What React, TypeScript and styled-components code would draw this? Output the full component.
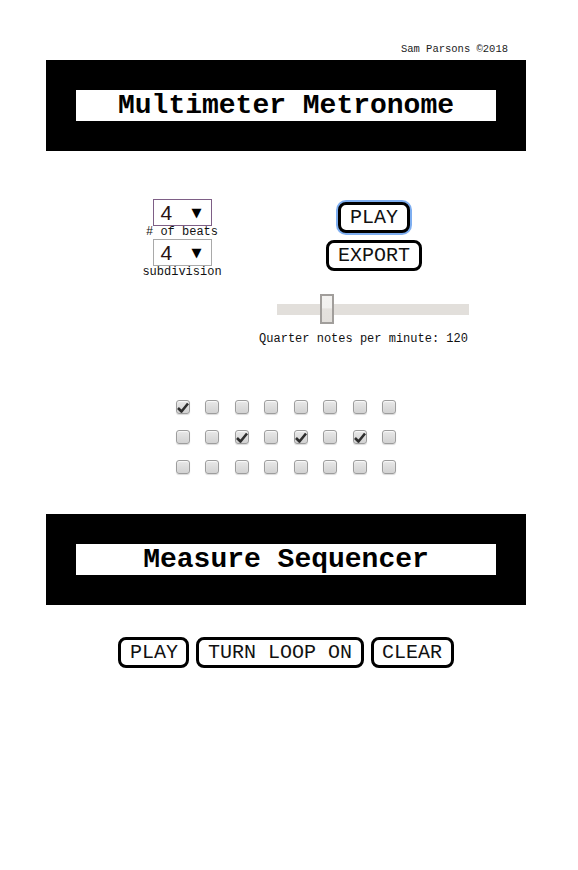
import React, { useState } from "react";
import styled, { createGlobalStyle } from "styled-components";

const GlobalStyle = createGlobalStyle`
  body {
    margin: 0;
    background: #fff;
    font-family: "Liberation Mono", "Courier New", monospace;
    color: #000;
  }
`;

const Page = styled.div`
  width: 480px;
  margin-left: 46px;
  padding-bottom: 40px;
`;

const Credit = styled.div`
  margin-top: 43px;
  padding-right: 18px;
  text-align: right;
  font-size: 10.5px;
  line-height: 12px;
  color: #222;
`;

const Banner = styled.div<{ $top: number }>`
  margin-top: ${(p) => p.$top}px;
  background: #000;
  padding: 30px;
`;

const BannerTitle = styled.h1`
  margin: 0;
  background: #fff;
  height: 31px;
  line-height: 31px;
  text-align: center;
  font-size: 28px;
  font-weight: bold;
`;

const Controls = styled.div`
  display: flex;
  align-items: flex-start;
  margin-top: 48px;
  padding-left: 96px;
  gap: 47px;
`;

const LeftCol = styled.div`
  width: 80px;
  display: flex;
  flex-direction: column;
  align-items: center;
`;

const RightCol = styled.div`
  width: 210px;
  display: flex;
  flex-direction: column;
  align-items: center;
  padding-top: 3px;
`;

const FakeSelect = styled.div<{ $hover?: boolean }>`
  box-sizing: border-box;
  width: 59px;
  height: 27px;
  border: 1px solid ${(p) => (p.$hover ? "#7e5f86" : "#a9a9a9")};
  display: flex;
  align-items: center;
  justify-content: space-between;
  padding: 0 9px 0 7px;
  font-family: "Liberation Sans", Arial, sans-serif;
  font-size: 21px;
  color: #2a1212;
  background: #fff;
`;

const Arrow = styled.span`
  font-family: "DejaVu Sans", sans-serif;
  font-size: 13px;
  color: #000;
`;

const SmallLabel = styled.div`
  font-size: 12px;
  line-height: 13px;
  color: #111;
  white-space: nowrap;
`;

const Button = styled.button<{ $focus?: boolean }>`
  box-sizing: border-box;
  height: 31px;
  font-family: "Liberation Mono", "Courier New", monospace;
  font-size: 20px;
  color: #111;
  background: #fff;
  border: 3px solid #000;
  border-radius: 8px;
  padding: 0 8.5px;
  cursor: pointer;
  box-shadow: ${(p) => (p.$focus ? "0 0 0 2px #7eaef0" : "none")};
  outline: none;
`;

const ButtonStack = styled.div`
  display: flex;
  flex-direction: column;
  align-items: center;
  gap: 7px;
`;

const Range = styled.input`
  -webkit-appearance: none;
  appearance: none;
  width: 192px;
  height: 30px;
  margin: 23px 2px 0 0;
  background: transparent;

  &::-webkit-slider-runnable-track {
    height: 11px;
    background: #e2dfdb;
    border: none;
  }
  &::-webkit-slider-thumb {
    -webkit-appearance: none;
    box-sizing: border-box;
    width: 14px;
    height: 30px;
    margin-top: -10px;
    border: 2px solid #a19e9b;
    background: linear-gradient(#f3f2f0 0%, #f1f0ee 45%, #e4e1dd 50%, #e2dfdb 100%);
  }
`;

const TempoText = styled.div`
  margin-top: 8px;
  margin-right: 21px;
  font-size: 12px;
  line-height: 14px;
  color: #111;
  white-space: nowrap;
`;

const Grid = styled.div`
  margin-top: 54px;
  display: grid;
  grid-template-columns: repeat(8, 14px);
  column-gap: 15.5px;
  row-gap: 16px;
  justify-content: center;
`;

const Box = styled.span`
  box-sizing: border-box;
  width: 14px;
  height: 14px;
  border: 1px solid #9d9d9d;
  border-radius: 3px;
  background: linear-gradient(#e8e8e8, #d2d2d2);
  box-shadow: inset 0 1px 1px rgba(255, 255, 255, 0.8), 0 1px 1px rgba(0, 0, 0, 0.15);
  display: flex;
  align-items: center;
  justify-content: center;
  cursor: pointer;
`;

const SeqButtons = styled.div`
  margin-top: 32px;
  display: flex;
  justify-content: center;
  gap: 7px;
`;

const Check = () => (
  <svg width="12" height="11" viewBox="0 0 12 11">
    <path d="M1 6 L4.5 9.5 L11 1.5" fill="none" stroke="#2e2e2e" strokeWidth="2.6" strokeLinejoin="round" />
  </svg>
);

const initialGrid = [
  [true, false, false, false, false, false, false, false],
  [false, false, true, false, true, false, true, false],
  [false, false, false, false, false, false, false, false],
];

export default function App() {
  const [cells, setCells] = useState(initialGrid);
  const [tempo, setTempo] = useState(120);

  const toggle = (r: number, c: number) =>
    setCells((prev) => prev.map((row, ri) => row.map((v, ci) => (ri === r && ci === c ? !v : v))));

  return (
    <>
      <GlobalStyle />
      <Page>
        <Credit>Sam Parsons ©2018</Credit>
        <Banner $top={5}>
          <BannerTitle>Multimeter Metronome</BannerTitle>
        </Banner>

        <Controls>
          <LeftCol>
            <FakeSelect $hover>
              <span>4</span>
              <Arrow>▼</Arrow>
            </FakeSelect>
            <SmallLabel># of beats</SmallLabel>
            <FakeSelect>
              <span>4</span>
              <Arrow>▼</Arrow>
            </FakeSelect>
            <SmallLabel>subdivision</SmallLabel>
          </LeftCol>
          <RightCol>
            <ButtonStack>
              <Button $focus>PLAY</Button>
              <Button>EXPORT</Button>
            </ButtonStack>
            <Range
              type="range"
              min={40}
              max={371}
              value={tempo}
              onChange={(e) => setTempo(Number(e.target.value))}
            />
            <TempoText>Quarter notes per minute: {tempo}</TempoText>
          </RightCol>
        </Controls>

        <Grid>
          {cells.map((row, r) =>
            row.map((on, c) => (
              <Box key={`${r}-${c}`} onClick={() => toggle(r, c)}>
                {on && <Check />}
              </Box>
            ))
          )}
        </Grid>

        <Banner $top={40}>
          <BannerTitle>Measure Sequencer</BannerTitle>
        </Banner>

        <SeqButtons>
          <Button>PLAY</Button>
          <Button>TURN LOOP ON</Button>
          <Button>CLEAR</Button>
        </SeqButtons>
      </Page>
    </>
  );
}
